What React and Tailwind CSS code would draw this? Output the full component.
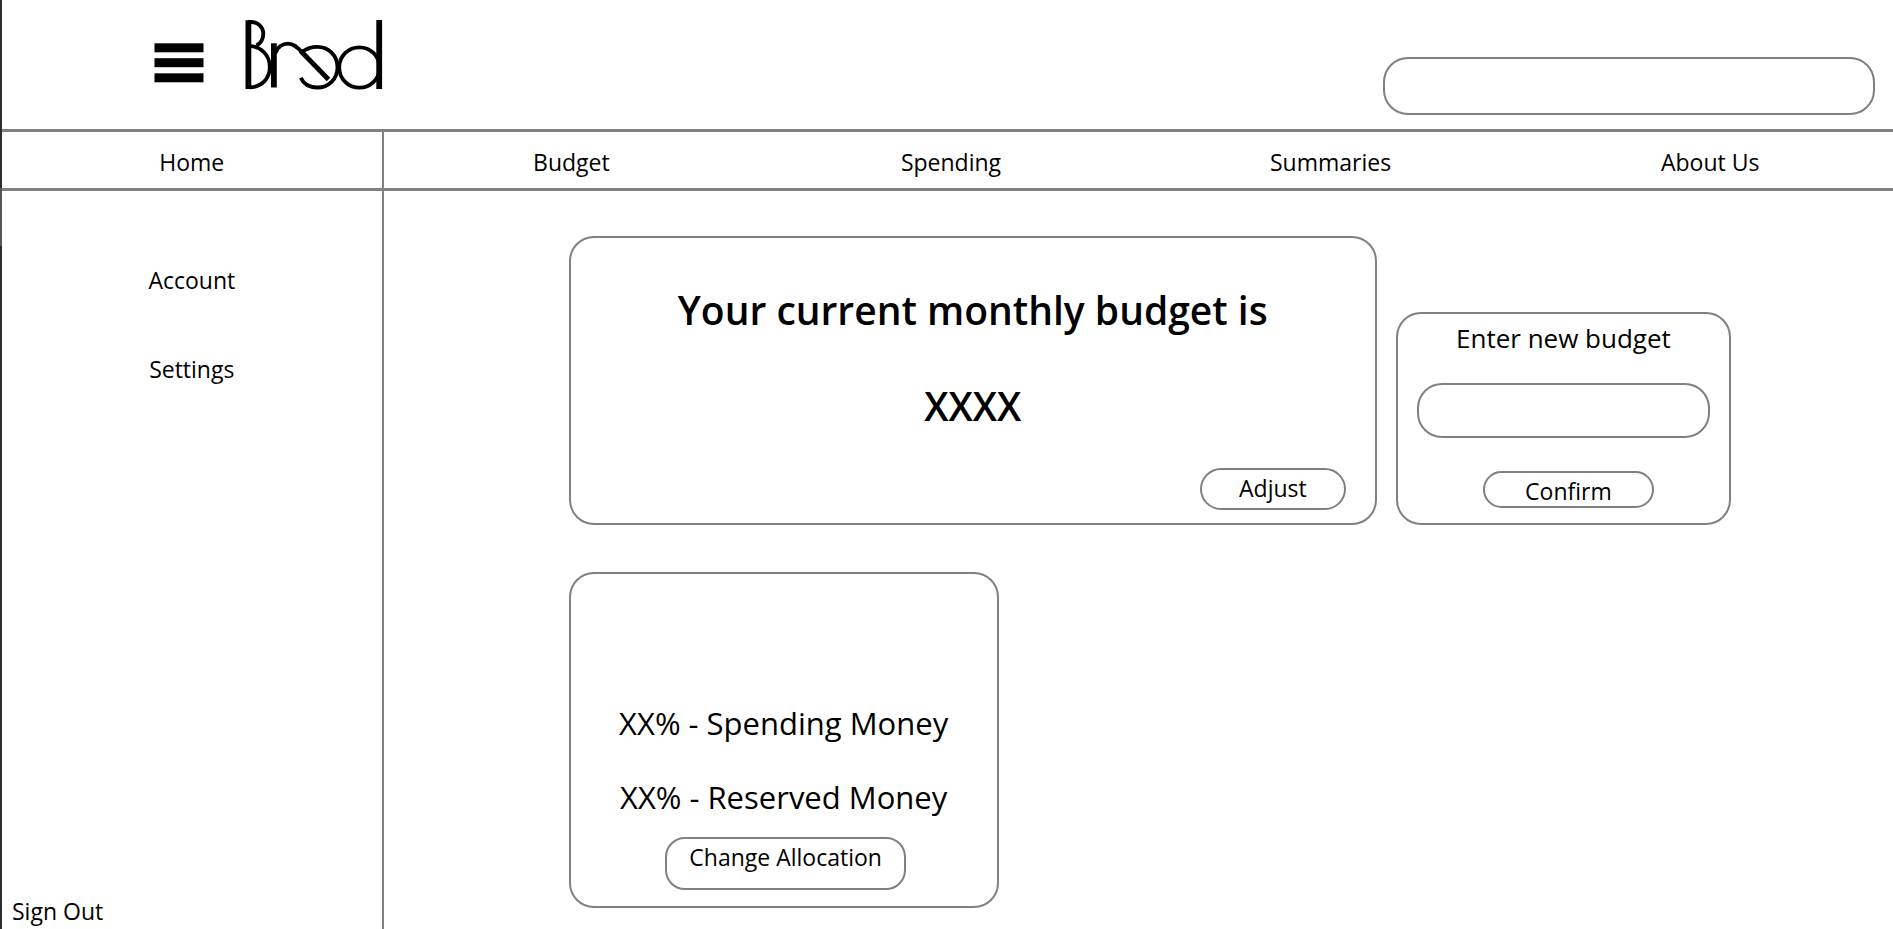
import React from "react";

const NAV_ITEMS = ["Budget", "Spending", "Summaries", "About Us"];

const outline = "border-2 border-[#808080] bg-white";
const pill = outline + " flex justify-center text-[23px] leading-7 cursor-pointer";

function Logo() {
  return (
    <svg
      className="h-[74px] w-[142px]"
      viewBox="0 0 142 74"
      fill="none"
      stroke="#000"
      strokeWidth="3.8"
      role="img"
      aria-label="Bred"
    >
      <path d="M4.4 2.3V71" strokeWidth="5.8" />
      <path d="M4 4H7C14 4 19.300 9 19.300 15.500C19.300 21 17 25 12.500 27.500" />
      <path d="M6 28.200C17 28.500 25.800 37 25.800 49C25.800 61 17 69.300 6 69.300" />
      <path d="M29.900 25.300V69.500" strokeWidth="5.800" />
      <path d="M31.500 35C34 28.500 38.500 25.700 44 25.700C49.500 25.700 53 29 57.500 33.800" />
      <path d="M56.500 32.800L84.500 61.500" strokeWidth="4.800" />
      <path d="M58.500 33.800C62.500 30.500 67.500 28.800 73.300 28.800C84.500 28.800 93.500 37.500 93.500 49.200C93.500 61 84.500 69.500 73.300 69.500C65.500 69.500 59.500 66 56.800 59.800" />
      <circle cx="115.400" cy="49.500" r="20.200" />
      <path d="M135.200 2V71" strokeWidth="5.800" />
    </svg>
  );
}

function Header() {
  return (
    <header className="flex h-[132px] items-start border-b-[3px] border-[#808080] pl-[152px] pr-[25px]">
      <button type="button" aria-label="Menu" className="mt-[43px] cursor-pointer">
        <svg className="h-10 w-[50px]" viewBox="0 0 50 40" fill="#000">
          <rect x="0.500" y="0.300" width="49" height="9" />
          <rect x="0.500" y="15.200" width="49" height="9" />
          <rect x="0.500" y="30.300" width="49" height="9" />
        </svg>
      </button>
      <a href="#home" className="ml-10 mt-[18px]">
        <Logo />
      </a>
      <input
        type="search"
        aria-label="Search"
        className={outline + " ml-auto mt-[57px] h-[58px] w-2/7 rounded-[25px] px-5 text-[23px] outline-none"}
      />
    </header>
  );
}

function Nav() {
  return (
    <nav className="grid h-[59px] grid-cols-5 border-b-[3px] border-[#808080] text-[23px] leading-7">
      <a
        href="#home"
        className="-mr-0.5 flex items-center justify-center border-r-2 border-[#808080] pt-1"
      >
        Home
      </a>
      {NAV_ITEMS.map((item) => (
        <a key={item} href="#section" className="flex items-center justify-center pt-1">
          {item}
        </a>
      ))}
    </nav>
  );
}

function Sidebar() {
  return (
    <aside className="box-content flex w-1/5 shrink-0 flex-col items-center border-r-2 border-[#808080] pb-1 pt-[75px] text-[23px] leading-7">
      <a href="#account">Account</a>
      <a href="#settings" className="mt-[61px]">
        Settings
      </a>
      <a href="#sign-out" className="mt-auto self-start pl-2.5">
        Sign Out
      </a>
    </aside>
  );
}

function BudgetCard() {
  return (
    <section className={outline + " flex flex-col items-center rounded-[25px] pb-[13px] pt-12"}>
      <h1 className="text-[39px] font-semibold leading-[48px]">Your current monthly budget is</h1>
      <p className="mt-12 text-[39px] font-semibold leading-[48px]">XXXX</p>
      <button
        type="button"
        className={pill + " mr-[29px] mt-[38px] h-[42px] w-[146px] items-center self-end rounded-full pb-0.5"}
      >
        Adjust
      </button>
    </section>
  );
}

function NewBudgetForm() {
  return (
    <form
      className={outline + " flex flex-col self-end rounded-[25px] px-[19px] pb-[15px] pt-1.5"}
      onSubmit={(event) => event.preventDefault()}
    >
      <label htmlFor="new-budget" className="text-center text-[26px] leading-9">
        Enter new budget
      </label>
      <input
        id="new-budget"
        type="text"
        className={outline + " mt-[27px] h-[55px] w-full rounded-[25px] px-5 text-[23px] outline-none"}
      />
      <div className="mt-[33px] flex justify-center pl-2.5">
        <button type="submit" className={pill + " h-[37px] w-[171px] items-center rounded-full pt-0.5"}>
          Confirm
        </button>
      </div>
    </form>
  );
}

function AllocationCard() {
  return (
    <section
      className={
        outline + " mt-[47px] flex w-[37%] flex-col items-center rounded-[25px] pb-4 pt-[129px] text-[31px] leading-10"
      }
    >
      <p>XX% - Spending Money</p>
      <p className="mt-[34px]">XX% - Reserved Money</p>
      <button type="button" className={pill + " ml-1 mt-5 h-[53px] w-[241px] items-start rounded-[20px] pt-1"}>
        Change Allocation
      </button>
    </section>
  );
}

export default function App() {
  return (
    <div className="flex min-h-screen overflow-hidden bg-white font-['Open_Sans','Noto_Sans',sans-serif] text-black">
      <div className="flex w-0.5 shrink-0 flex-col bg-[#2d2d2d]">
        <div className="mt-[188px] h-[58px] bg-[#555555]" />
      </div>
      <div className="-mr-[7px] flex min-w-0 grow flex-col">
        <Header />
        <Nav />
        <div className="flex grow">
          <Sidebar />
          <main className="grow pb-[21px] pl-[185px] pr-[169px] pt-[45px]">
            <div className="grid grid-cols-[808fr_335fr] gap-[19px]">
              <BudgetCard />
              <NewBudgetForm />
            </div>
            <AllocationCard />
          </main>
        </div>
      </div>
    </div>
  );
}
